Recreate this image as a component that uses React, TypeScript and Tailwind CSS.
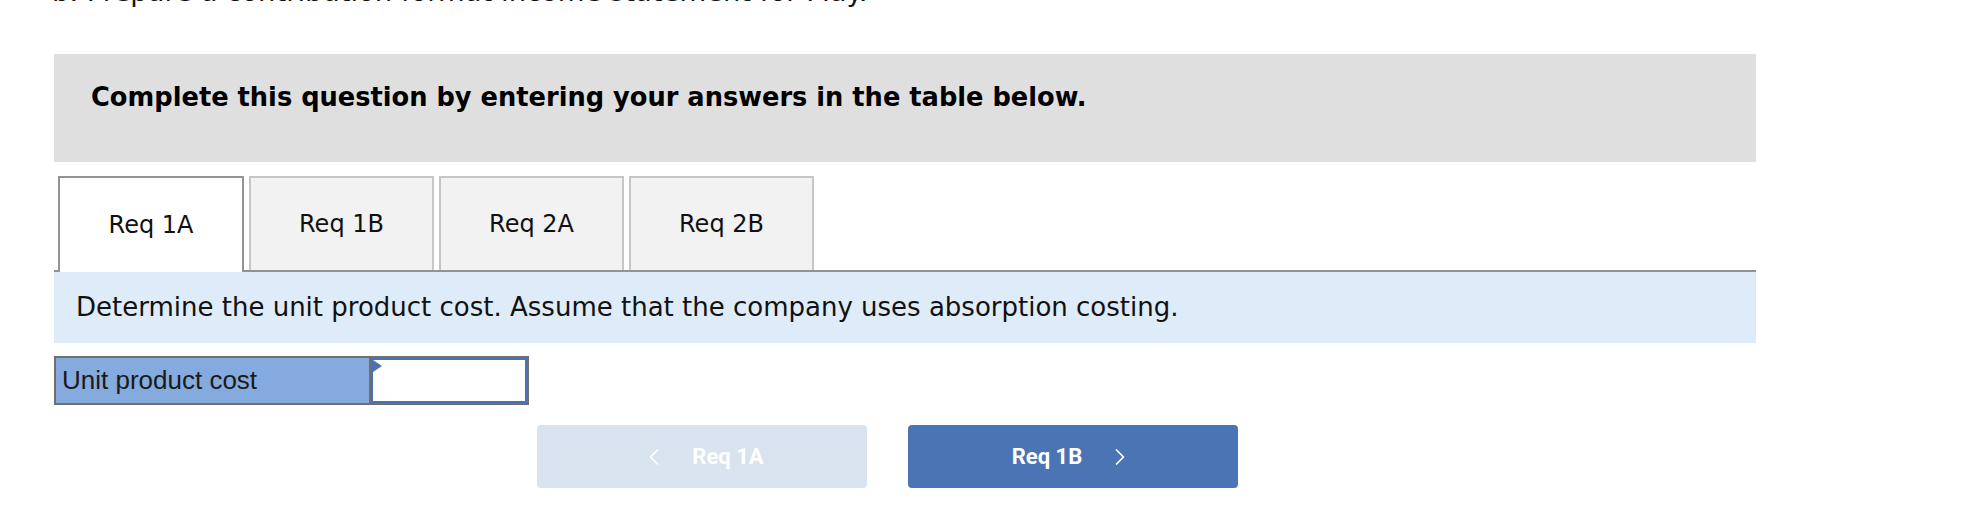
import React from "react";
import { ChevronLeft, ChevronRight } from "lucide-react";

const verdana = { fontFamily: '"DejaVu Sans", Verdana, sans-serif' };

export default function App() {
  const tabs = ["Req 1A", "Req 1B", "Req 2A", "Req 2B"];
  return (
    <div className="w-[1974px] h-[518px] overflow-hidden bg-white" style={verdana}>
      <div className="ml-[52px] -mt-[24px] text-[27.4px] leading-[32px] text-[#111] whitespace-nowrap">
        b. Prepare a contribution format income statement for May.
      </div>
      <div className="ml-[54px] w-[1702px] mt-[46px]">
        <div className="h-[108px] bg-[#dfdfdf] pl-[37px] pt-[27px]">
          <div className="text-[25.7px] font-bold text-black leading-[32px] whitespace-nowrap">
            Complete this question by entering your answers in the table below.
          </div>
        </div>
        <div className="mt-[14px] flex items-end border-b-2 border-[#939393] pl-[4px] gap-[5px] h-[96px]">
          {tabs.map((t, i) =>
            i === 0 ? (
              <div
                key={t}
                className="w-[186px] h-[96px] -mb-[2px] bg-white border-2 border-b-0 border-[#949494] flex items-center justify-center text-[24px] text-[#111]"
              >
                {t}
              </div>
            ) : (
              <div
                key={t}
                className="w-[185px] h-[94px] bg-[#f2f2f2] border-2 border-b-0 border-[#c6c6c6] flex items-center justify-center text-[24px] text-[#111]"
              >
                {t}
              </div>
            )
          )}
        </div>
        <div className="h-[71px] bg-[#deebf8] flex items-center pl-[22px] text-[26px] text-[#111] whitespace-nowrap">
          Determine the unit product cost. Assume that the company uses absorption costing.
        </div>
        <div className="mt-[13px] flex w-[475px] h-[49px] border-2 border-[#6f6f6f]" style={{ fontFamily: '"Liberation Sans", Arial, sans-serif' }}>
          <div className="w-[315px] bg-[#84aade] border-r-2 border-[#6f6f6f] flex items-center pl-[6px] text-[26px] text-[#1a1a1a] whitespace-nowrap">
            Unit product cost
          </div>
          <div className="relative flex-1 border-2 border-[#4a72b2] bg-white">
            <div className="absolute left-0 top-0 w-0 h-0 border-t-[6px] border-b-[6px] border-l-[9px] border-t-transparent border-b-transparent border-l-[#4a72b2]" />
          </div>
        </div>
        <div className="mt-[20px] flex gap-[41px] pl-[483px]" style={{ fontFamily: 'Roboto, "Liberation Sans", sans-serif' }}>
          <div className="w-[330px] h-[63px] rounded-[4px] bg-[#d9e3ef] flex items-center justify-center gap-[24px] text-white text-[22px] font-bold">
            <ChevronLeft size={28} strokeWidth={1.5} />
            <span>Req 1A</span>
          </div>
          <div className="w-[330px] h-[63px] rounded-[4px] bg-[#4a74b4] flex items-center justify-center gap-[24px] text-white text-[22px] font-bold">
            <span>Req 1B</span>
            <ChevronRight size={28} strokeWidth={1.5} />
          </div>
        </div>
      </div>
    </div>
  );
}
